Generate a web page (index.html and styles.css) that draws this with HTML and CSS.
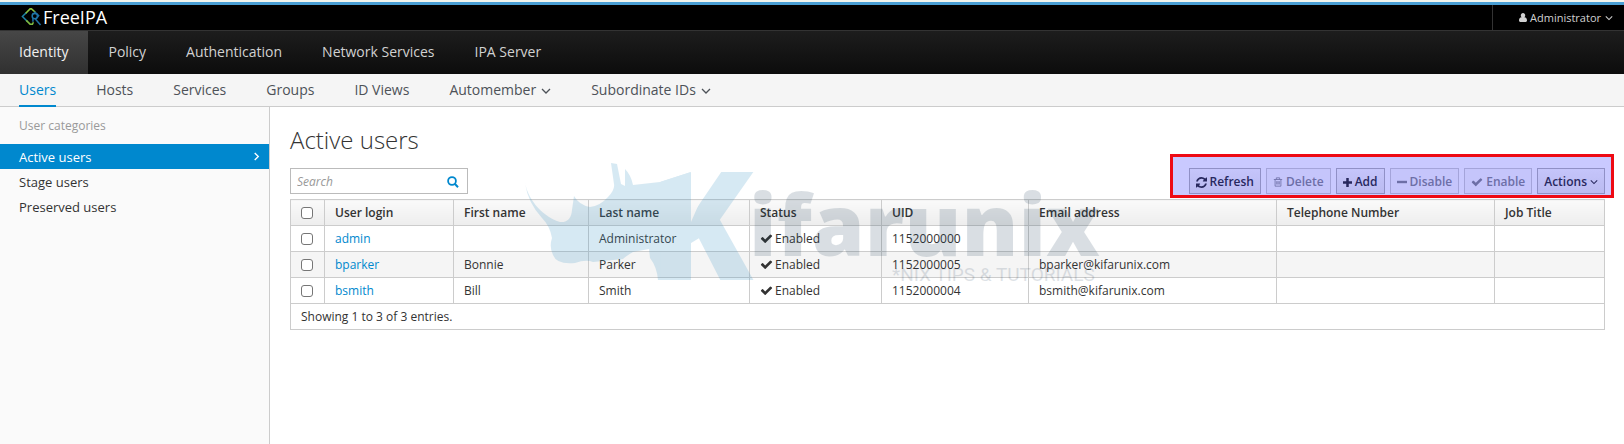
FILE: index.html
```html
<!DOCTYPE html>
<html lang="en">
<head>
<meta charset="utf-8">
<title>Identity Management</title>
<link rel="stylesheet" href="styles.css">
</head>
<body>
<svg class="sprite" aria-hidden="true">
  <symbol id="chevron" viewBox="0 0 10 10"><path d="M1 3l4 4 4-4" fill="none" stroke="currentColor" stroke-width="1.3"/></symbol>
  <symbol id="check" viewBox="0 0 1792 1792"><path fill="currentColor" d="M1671 566q0 40-28 68l-724 724-136 136q-28 28-68 28t-68-28l-136-136-362-362q-28-28-28-68t28-68l136-136q28-28 68-28t68 28l294 295 656-657q28-28 68-28t68 28l136 136q28 28 28 68z"/></symbol>
</svg>
<header class="masthead">
  <a class="brand" href="#">
    <svg class="brand-mark" viewBox="0 0 22 20" fill="none" stroke-width="1.6" aria-hidden="true">
      <path d="M6 5L1.500 9.500l5 5" stroke="#1d83a8"/>
      <path d="M5 6L9.500 1.500h1.500l4 3.500" stroke="#8cc43f"/>
      <path d="M5.500 13.500l4 4h2.500l1-2" stroke="#7dbb42"/>
      <circle cx="14.500" cy="9" r="2.800" stroke="#1f78a8"/>
      <path d="M14 4.500l4.500 4-2 2.500M12.500 11v4M15 12l5.500 6.500" stroke="#1f6fa3"/>
    </svg>
    <span>FreeIPA</span>
  </a>
  <button class="account" type="button">
    <svg class="icon-user" viewBox="0 0 10 11" aria-hidden="true"><path fill="currentColor" d="M5 0a2.600 2.900 0 0 1 1.700 5.200C9 5.500 10 7 10 9.300 10 10.500 9.300 11 8.500 11h-7C.7 11 0 10.500 0 9.300 0 7 1 5.500 3.300 5.200A2.600 2.900 0 0 1 5 0z"/></svg>
    <span>Administrator</span>
    <svg class="chevron-small" aria-hidden="true"><use href="#chevron"/></svg>
  </button>
</header>
<nav class="primary-nav" aria-label="Primary">
  <a class="current" href="#">Identity</a>
  <a href="#">Policy</a>
  <a href="#">Authentication</a>
  <a href="#">Network Services</a>
  <a href="#">IPA Server</a>
</nav>
<nav class="secondary-nav" aria-label="Identity">
  <a class="current" href="#">Users</a>
  <a href="#">Hosts</a>
  <a href="#">Services</a>
  <a href="#">Groups</a>
  <a href="#">ID Views</a>
  <a href="#">Automember<svg class="chevron" aria-hidden="true"><use href="#chevron"/></svg></a>
  <a href="#">Subordinate IDs<svg class="chevron" aria-hidden="true"><use href="#chevron"/></svg></a>
</nav>
<div class="layout">
  <aside class="sidebar">
    <h2>User categories</h2>
    <a class="current" href="#">Active users<svg class="chevron-right" viewBox="0 0 10 10" aria-hidden="true"><path d="M3 1l4 4-4 4" fill="none" stroke="currentColor" stroke-width="1.500"/></svg></a>
    <a href="#">Stage users</a>
    <a href="#">Preserved users</a>
  </aside>
  <main class="content">
    <h1>Active users</h1>
    <div class="toolbar">
      <form class="search">
        <input type="text" placeholder="Search" aria-label="Search">
        <button type="button" aria-label="Find"><svg viewBox="0 0 12 12" aria-hidden="true"><circle cx="5" cy="5" r="3.900" fill="none" stroke="currentColor" stroke-width="1.800"/><path d="M7.800 7.800l3.200 3.400" stroke="currentColor" stroke-width="2"/></svg></button>
      </form>
      <div class="actions">
        <button type="button"><svg class="icon-refresh" viewBox="0 0 1536 1536" aria-hidden="true"><path fill="currentColor" d="M1511 928q0 5-1 7-64 268-268 434.500T764 1536q-146 0-282.500-55T238 1324l-129 129q-19 19-45 19t-45-19-19-45V960q0-26 19-45t45-19h448q26 0 45 19t19 45-19 45l-137 137q71 66 161 102t187 36q134 0 250-65t186-179q11-17 53-117 8-23 30-23h192q13 0 22.500 9.500t9.500 22.500zm25-800v448q0 26-19 45t-45 19h-448q-26 0-45-19t-19-45 19-45l138-138Q969 256 768 256q-134 0-250 65T332 500q-11 17-53 117-8 23-30 23H50q-13 0-22.500-9.500T18 608v-7q65-268 270-434.500T768 0q146 0 284 55.500T1297 212l130-129q19-19 45-19t45 19 19 45z"/></svg>Refresh</button>
        <button type="button" disabled><svg viewBox="0 0 12 12" fill="none" stroke="currentColor" aria-hidden="true"><path d="M1 3h10M4 3V1h4v2M2.500 3v8h7V3M4.500 5v4M6 5v4M7.500 5v4"/></svg>Delete</button>
        <button type="button"><svg class="icon-add" viewBox="0 0 10 10" aria-hidden="true"><path d="M5 0v10M0 5h10" stroke="currentColor" stroke-width="2.800"/></svg>Add</button>
        <button type="button" disabled><svg viewBox="0 0 10 10" aria-hidden="true"><path d="M0 5h10" stroke="currentColor" stroke-width="2.400"/></svg>Disable</button>
        <button type="button" disabled><svg class="icon-enable" aria-hidden="true"><use href="#check"/></svg>Enable</button>
        <button type="button">Actions<svg class="icon-caret" aria-hidden="true"><use href="#chevron"/></svg></button>
      </div>
    </div>
    <table class="users">
      <colgroup><col class="w-check"><col class="w-login"><col class="w-first"><col class="w-last"><col class="w-status"><col class="w-uid"><col class="w-email"><col class="w-phone"><col class="w-job"></colgroup>
      <thead>
        <tr><th><input type="checkbox" aria-label="Select all"></th><th>User login</th><th>First name</th><th>Last name</th><th>Status</th><th>UID</th><th>Email address</th><th>Telephone Number</th><th>Job Title</th></tr>
      </thead>
      <tbody>
        <tr><td><input type="checkbox" aria-label="Select admin"></td><td><a href="#">admin</a></td><td></td><td>Administrator</td><td><svg class="icon-check" aria-hidden="true"><use href="#check"/></svg>Enabled</td><td>1152000000</td><td></td><td></td><td></td></tr>
        <tr><td><input type="checkbox" aria-label="Select bparker"></td><td><a href="#">bparker</a></td><td>Bonnie</td><td>Parker</td><td><svg class="icon-check" aria-hidden="true"><use href="#check"/></svg>Enabled</td><td>1152000005</td><td>bparker@kifarunix.com</td><td></td><td></td></tr>
        <tr><td><input type="checkbox" aria-label="Select bsmith"></td><td><a href="#">bsmith</a></td><td>Bill</td><td>Smith</td><td><svg class="icon-check" aria-hidden="true"><use href="#check"/></svg>Enabled</td><td>1152000004</td><td>bsmith@kifarunix.com</td><td></td><td></td></tr>
      </tbody>
      <tfoot><tr><td colspan="9">Showing 1 to 3 of 3 entries.</td></tr></tfoot>
    </table>
    <svg class="watermark" viewBox="0 0 600 130" aria-hidden="true">
      <clipPath id="initial-edge"><path d="M100 140V28L140 22L171 12V62L193 12H250V140Z"/></clipPath>
      <g class="watermark-logo">
        <path d="M5 23C9 42 24 57 40 62Q51 63 52 50L54 36Q59 45 70 47Q80 46 88 37Q95 30 94 24L91 3L97 4L101 24L105 26L105 9Q111 15 113 25L140 22L171 12L171 120L138 120Q137 107 130 98L129 89L113 92Q106 96 103 99L73 102Q66 99 55 103Q37 105 33 95Q29 87 32 78Q30 66 22 58Q8 43 5 23Z"/>
        <text class="watermark-initial" x="129" y="120" clip-path="url(#initial-edge)">K</text>
      </g>
      <text class="watermark-name" x="229" y="96">ifarunix</text>
      <text class="watermark-tag" x="372" y="121">*NIX TIPS &amp; TUTORIALS</text>
    </svg>
  </main>
</div>
</body>
</html>
```

FILE: styles.css
```css
* { box-sizing: border-box; }
body {
  margin: 0;
  min-height: 100vh;
  display: flex;
  flex-direction: column;
  border-top: 2px solid #f3f6ee;
  background: #fff;
  color: #333;
  font: 12px/18px "Open Sans", "Noto Sans", sans-serif;
}
a { color: #0088ce; text-decoration: none; }
button, input { font: inherit; color: inherit; }
.sprite { display: none; }

.masthead {
  display: flex;
  justify-content: space-between;
  height: 28px;
  border-top: 3px solid #4a9fd4;
  background: #000;
}
.brand {
  display: flex;
  align-items: center;
  gap: 1px;
  padding: 0 0 2px 21px;
  color: #fff;
  font-size: 18px;
  font-weight: 500;
  line-height: 22px;
}
.brand-mark { width: 21px; height: 20px; }
.account {
  display: flex;
  align-items: center;
  gap: 3px;
  padding: 0 11px 0 26px;
  border: 0;
  border-left: 1px solid #333;
  background: none;
  color: #d1d1d1;
  font-size: 11px;
}
.icon-user { width: 8px; height: 9px; }
.chevron-small { width: 8px; height: 8px; }
.account .chevron-small { margin-left: 1px; }

.primary-nav {
  display: flex;
  height: 44px;
  border-top: 1px solid #333;
  background: linear-gradient(#1d1d1d, #0c0c0c);
}
.primary-nav a {
  padding: 0 20px;
  color: #d1d1d1;
  font-size: 14px;
  line-height: 42px;
}
.primary-nav a:first-child { padding-left: 19px; }
.primary-nav .current {
  background: linear-gradient(#474747, #303030);
  color: #f1f1f1;
}

.secondary-nav {
  display: flex;
  gap: 40px;
  height: 33px;
  padding: 0 19px;
  border-bottom: 1px solid #ccc;
  background: #f5f5f5;
}
.secondary-nav a {
  display: flex;
  align-items: center;
  height: 33px;
  padding-bottom: 2px;
  color: #4d5258;
  font-size: 14px;
}
.secondary-nav .current {
  border-bottom: 2px solid #0088ce;
  padding-bottom: 0;
  color: #0088ce;
}
.chevron { width: 10px; height: 10px; margin: 3px 0 0 5px; }

.layout { display: flex; flex: 1; }
.sidebar {
  flex: 0 0 270px;
  padding-top: 9px;
  border-right: 1px solid #ccc;
  background: #fafafa;
}
.sidebar h2 {
  margin: 0 0 9px;
  padding-left: 19px;
  color: #999;
  font-size: 12px;
  font-weight: 400;
  line-height: 19px;
}
.sidebar a {
  display: flex;
  align-items: center;
  justify-content: space-between;
  height: 25px;
  padding: 0 8px 0 19px;
  color: #333;
  font-size: 13px;
}
.sidebar .current { background: #0088ce; color: #fff; }
.chevron-right { width: 9px; height: 9px; }

.content {
  position: relative;
  flex: 1;
  min-width: 0;
  padding: 16px 19px 0 20px;
}
.content h1 {
  margin: 0 0 11px;
  font-size: 24px;
  font-weight: 300;
  line-height: 34px;
}
.toolbar {
  display: flex;
  justify-content: space-between;
  margin-bottom: 5px;
}
.search {
  display: flex;
  width: 178px;
  height: 26px;
  border: 1px solid #bbb;
}
.search input {
  flex: 1;
  min-width: 0;
  padding: 2px 6px 0;
  border: 0;
  background: none;
}
.search input::placeholder { color: #999; font-style: italic; }
.search button { padding: 2px 8px 0; border: 0; background: none; color: #0088ce; }
.search svg { display: block; width: 12px; height: 12px; }

.actions { position: relative; display: flex; gap: 5px; }
.actions::after {
  content: "";
  position: absolute;
  inset: -14px -9px -4px -19px;
  border: 3px solid #ee0a14;
  background: rgba(0, 0, 255, .21);
  pointer-events: none;
}
.actions button {
  display: flex;
  align-items: center;
  gap: 3px;
  height: 26px;
  padding: 2px 6px 0;
  border: 1px solid #b7b7b7;
  background: linear-gradient(#fafafa, #ededed);
  color: #333;
  font-weight: 600;
}
.actions button:disabled { background: #fafafa; border-color: #d1d1d1; color: #8b8d8f; }
.actions svg { width: 10px; height: 10px; }
.actions .icon-refresh { width: 11px; height: 11px; }
.actions .icon-enable { width: 12px; height: 12px; }
.actions .icon-add { width: 9px; height: 9px; }
.actions .icon-caret { width: 8px; height: 8px; }

.users {
  width: 100%;
  table-layout: fixed;
  border-collapse: collapse;
}
.users th, .users td {
  height: 26px;
  padding: 0 10px;
  border: 1px solid #ccc;
  font-weight: 400;
  text-align: left;
}
.users th { font-weight: 600; background: linear-gradient(#fafafa, #ededed); }
.users tbody tr:nth-child(even) { background: #f5f5f5; }
.w-check { width: 34px; }
.w-login { width: 129px; }
.w-first { width: 135px; }
.w-last { width: 161px; }
.w-status { width: 132px; }
.w-uid { width: 147px; }
.w-email { width: 248px; }
.w-phone { width: 218px; }
.users input {
  display: block;
  width: 12px;
  height: 12px;
  margin: 0;
  appearance: none;
  border: 1px solid #767676;
  border-radius: 3px;
  background: #fff;
}
.icon-check { width: 13px; height: 13px; margin-right: 2px; vertical-align: -2px; }

.watermark {
  position: absolute;
  top: 53px;
  left: 250px;
  width: 600px;
  height: 130px;
  overflow: visible;
  pointer-events: none;
}
.watermark-logo { fill: #3a94c4; opacity: .2; }
.watermark-initial { font-size: 152px; font-weight: 800; }
.watermark-name { fill: #1a3a55; opacity: .16; font-size: 85px; font-weight: 800; }
.watermark-tag { fill: #1a3a55; opacity: .14; font: 400 19px Roboto, sans-serif; }
```
